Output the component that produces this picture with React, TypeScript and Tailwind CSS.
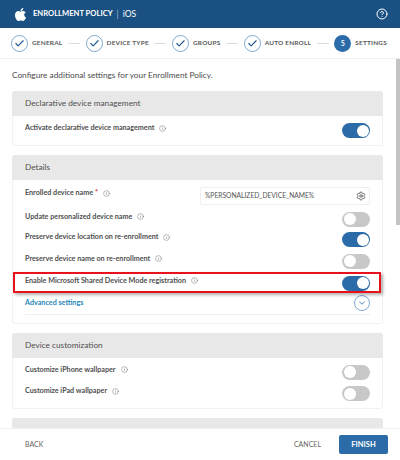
import { FaApple } from 'react-icons/fa'
import { Check, ChevronDown, CircleHelp, Info, Settings } from 'lucide-react'

const font = { fontFamily: 'Lato, sans-serif' }

const Toggle = ({ on }: { on: boolean }) => (
  <div className={`flex h-[15px] w-[28px] shrink-0 items-center rounded-full px-[1.5px] ${on ? 'justify-end bg-[#2b6ca8]' : 'justify-start bg-[#c8c8c8]'}`}>
    <div className="h-[12px] w-[12px] rounded-full bg-white" />
  </div>
)

const Label = ({ text, required }: { text: string; required?: boolean }) => (
  <div className="flex items-center pb-[4px] text-[7.2px] font-bold whitespace-nowrap text-[#4f4f4f]">
    <span>{text}</span>
    {required && <span className="ml-[2px] text-[#d0281e]">*</span>}
    <Info size={7} strokeWidth={1.5} className="ml-[5px] text-[#666]" />
  </div>
)

const Row = ({ text, on, h }: { text: string; on: boolean; h: string }) => (
  <div className={`flex items-center justify-between ${h}`}>
    <Label text={text} />
    <Toggle on={on} />
  </div>
)

const Card = ({ title, children }: { title: string; children: React.ReactNode }) => (
  <div className="mb-[9px] rounded-[3px] border-x border-b border-[#f1f1f1] bg-white">
    <div className="-mx-px flex h-[25px] items-center rounded-t-[3px] bg-[#e8e8e8] px-[13px] text-[8.25px] whitespace-nowrap text-[#4f4f4f]">{title}</div>
    <div className="px-[12px]">{children}</div>
  </div>
)

const Step = ({ label }: { label: string }) => (
  <>
    <div className="flex items-center gap-[4px]">
      <div className="flex h-[17px] w-[17px] items-center justify-center rounded-full border border-[#7fa9cf]">
        <Check size={11} strokeWidth={2.5} className="text-[#1f5a92]" />
      </div>
      <span className="text-[6.45px] font-bold tracking-[0.2px] whitespace-nowrap text-[#5a5a5a]">{label}</span>
    </div>
    <div className="h-px w-[12px] bg-[#ddd]" />
  </>
)

export default function App() {
  return (
    <div style={font} className="relative flex h-[460px] w-[400px] flex-col overflow-hidden bg-white">
      <div className="flex h-[28px] shrink-0 items-center justify-between bg-[#1a5082] pl-[13px] pr-[12px] text-white">
        <div className="flex items-center">
          <FaApple size={15} />
          <span className="ml-[5px] text-[7.6px] font-bold whitespace-nowrap">ENROLLMENT POLICY</span>
          <span className="mx-[4px] text-[9px] font-light">|</span>
          <span className="text-[8.5px]">iOS</span>
        </div>
        <CircleHelp size={12} strokeWidth={2} />
      </div>

      <div className="flex h-[31px] shrink-0 items-center gap-[5.6px] border-b border-[#efefef] pl-[11px]">
        <Step label="GENERAL" />
        <Step label="DEVICE TYPE" />
        <Step label="GROUPS" />
        <Step label="AUTO ENROLL" />
        <div className="flex items-center gap-[4px]">
          <div className="flex h-[17px] w-[17px] items-center justify-center rounded-full bg-[#2b6ca8] text-[7px] font-bold text-white">5</div>
          <span className="text-[6.45px] font-bold tracking-[0.2px] whitespace-nowrap text-[#5a5a5a]">SETTINGS</span>
        </div>
      </div>

      <div className="min-h-0 flex-1 overflow-hidden pl-[12px] pr-[17px] pt-[10px]">
        <div className="mb-[9px] text-[8.25px] leading-[13px] whitespace-nowrap text-[#4a4a4a]">Configure additional settings for your Enrollment Policy.</div>
        <Card title="Declarative device management">
          <div className="flex h-[29px] items-center justify-between">
            <Label text="Activate declarative device management" />
            <Toggle on />
          </div>
        </Card>
        <Card title="Details">
          <div className="mt-[2px] flex h-[27px] items-center justify-between">
            <Label text="Enrolled device name" required />
            <div className="flex h-[18px] w-[170px] items-center justify-between rounded-[2px] border border-[#efefef] pl-[4px] pr-[3px] text-[6.7px] text-[#555]">
              <span>%PERSONALIZED_DEVICE_NAME%</span>
              <Settings size={10} className="text-[#555]" />
            </div>
          </div>
          <Row text="Update personalized device name" on={false} h="h-[20px]" />
          <Row text="Preserve device location on re-enrollment" on h="h-[21px]" />
          <Row text="Preserve device name on re-enrollment" on={false} h="h-[22px]" />
          <Row text="Enable Microsoft Shared Device Mode registration" on h="h-[22px]" />
          <div className="flex h-[21px] items-center justify-between border-b border-[#eee] pb-[3px]">
            <span className="pt-[2px] text-[7.2px] font-bold whitespace-nowrap text-[#2b87b8]">Advanced settings</span>
            <div className="flex h-[16px] w-[16px] items-center justify-center rounded-full border border-[#7fa9cf]">
              <ChevronDown size={10} className="text-[#2b6ca8]" />
            </div>
          </div>
          <div className="h-[8px]" />
        </Card>
        <Card title="Device customization">
          <div className="pb-[4px] pt-[3px]">
            <Row text="Customize iPhone wallpaper" on={false} h="h-[22px]" />
            <Row text="Customize iPad wallpaper" on={false} h="h-[21px]" />
          </div>
        </Card>
        <Card title="">
          <div className="h-[20px]" />
        </Card>
      </div>

      <div className="flex h-[32px] shrink-0 items-center justify-between border-t border-[#efefef] bg-white pl-[25px] pr-[12px]">
        <span className="text-[7px] text-[#666]">BACK</span>
        <div className="flex items-center gap-[18px]">
          <span className="text-[7px] text-[#666]">CANCEL</span>
          <div className="flex h-[19px] w-[49px] items-center justify-center rounded-[2px] bg-[#2b6ca8] text-[7.5px] font-bold text-white">FINISH</div>
        </div>
      </div>

      <div className="absolute right-0 top-[59px] h-[166px] w-[4px] bg-[#c4c4c4]" />
      <div className="absolute left-[13px] top-[272px] h-[21px] w-[368px] border-2 border-[#e8111c] shadow-[2px_2px_3px_rgba(0,0,0,0.3)]" />
    </div>
  )
}
